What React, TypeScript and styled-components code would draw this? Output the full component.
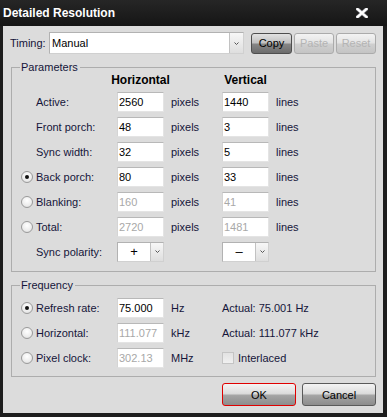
import React from "react";
import styled, { createGlobalStyle, css } from "styled-components";

const Global = createGlobalStyle`
  html, body { margin: 0; padding: 0; background: #1d1d1d; }
  body { font-family: "Liberation Sans", Arial, sans-serif; font-size: 11px; }
  * { box-sizing: border-box; }
`;

const Window = styled.div`
  width: 387px;
  height: 417px;
  background: #1d1d1d;
  display: flex;
  flex-direction: column;
  padding: 0 4px 4px 3px;
`;

const TitleBar = styled.div`
  height: 26px;
  margin: 0 -4px 0 -3px;
  padding: 0 19px 1px 3px;
  display: flex;
  align-items: center;
  justify-content: space-between;
  background: linear-gradient(#262626, #151515);
  color: #fff;
  font-weight: bold;
  font-size: 12px;
`;

const Body = styled.div`
  flex: 1;
  background: #dcdcdc;
  padding: 6px 7px 0 8px;
  display: flex;
  flex-direction: column;
  color: #15153a;
`;

const TopRow = styled.div`
  display: flex;
  align-items: center;
  margin-left: -1px;
  height: 22px;
`;

const TimingLabel = styled.span`
  width: 39px;
`;

const Combo = styled.div<{ $w: number; $h: number }>`
  width: ${(p) => p.$w}px;
  height: ${(p) => p.$h}px;
  display: flex;
  border: 1px solid #b2b2b2;
  border-right-color: #d0d0d0;
  border-bottom-color: #d0d0d0;
  background: #fff;
  color: #000;
`;

const ComboText = styled.div<{ $center?: boolean }>`
  flex: 1;
  display: flex;
  align-items: center;
  padding-left: 2px;
  ${(p) =>
    p.$center &&
    css`
      justify-content: center;
      padding-left: 0;
      font-size: 13px;
    `}
`;

const ComboButton = styled.div<{ $w: number }>`
  width: ${(p) => p.$w}px;
  border-left: 1px solid #c2c2c2;
  background: linear-gradient(#f7f7f7, #dedede);
  display: flex;
  align-items: center;
  justify-content: center;
`;

const ToolButtons = styled.div`
  display: flex;
  gap: 2px;
  margin-left: 7px;
`;

type Variant = "dark" | "disabled" | "focus" | "normal";

const Button = styled.button<{ $variant: Variant; $w: number; $h: number }>`
  width: ${(p) => p.$w}px;
  height: ${(p) => p.$h}px;
  font-family: "Liberation Sans", Arial, sans-serif;
  font-size: 11px;
  border-radius: 3px;
  padding: 0;
  display: flex;
  align-items: center;
  justify-content: center;
  ${(p) =>
    p.$variant === "dark" &&
    css`
      border: 1px solid #4e4e4e;
      background: linear-gradient(#e2e2e2 0%, #c2c2c2 45%, #858585 55%, #6c6c6c 100%);
      color: #000;
    `}
  ${(p) =>
    p.$variant === "disabled" &&
    css`
      border: 1px solid #ababab;
      background: linear-gradient(#f3f3f3 0%, #e4e4e4 45%, #cfcfcf 55%, #c4c4c4 100%);
      color: #b4b4b4;
    `}
  ${(p) =>
    p.$variant === "focus" &&
    css`
      border: 1px solid #e00000;
      background: linear-gradient(#f4f4f4 0%, #dcdcdc 45%, #a4a4a4 55%, #8c8c8c 100%);
      color: #000;
    `}
  ${(p) =>
    p.$variant === "normal" &&
    css`
      border: 1px solid #5a5a5a;
      background: linear-gradient(#f4f4f4 0%, #dcdcdc 45%, #a4a4a4 55%, #8c8c8c 100%);
      color: #000;
    `}
`;

const Group = styled.fieldset<{ $gap: number; $pt: number; $pb: number }>`
  margin: ${(p) => p.$gap}px 0 0 0;
  min-width: 0;
  border: 1px solid #adadad;
  padding: ${(p) => p.$pt}px 8px ${(p) => p.$pb}px 8px;
`;

const Legend = styled.legend`
  padding: 0 2px 0 1px;
  line-height: 13px;
  font-size: 11px;
  color: #15153a;
`;

const Grid = styled.div<{ $header?: boolean; $rows: number }>`
  display: grid;
  grid-template-columns: 16px 81px 47px 58px 47px 1fr;
  grid-template-rows: ${(p) => (p.$header ? "15px " : "")}repeat(${(p) => p.$rows}, 25px);
  align-items: center;
`;

const Header = styled.div<{ $col: number }>`
  grid-column: ${(p) => p.$col};
  justify-self: center;
  align-self: start;
  font-weight: bold;
  font-size: 12px;
  line-height: 13px;
  color: #000;
  white-space: nowrap;
`;

const RadioCell = styled.div`
  grid-column: 1;
  display: flex;
  align-items: center;
`;

const Radio = styled.span<{ $on?: boolean }>`
  width: 12px;
  height: 12px;
  margin-left: 1px;
  border-radius: 50%;
  border: 1px solid #9a9a9a;
  background: radial-gradient(circle at 50% 35%, #ffffff 0%, #ececec 60%, #d6d6d6 100%);
  display: flex;
  align-items: center;
  justify-content: center;
  &::after {
    content: "";
    width: 4px;
    height: 4px;
    border-radius: 50%;
    background: ${(p) => (p.$on ? "#111" : "transparent")};
  }
`;

const Label = styled.div`
  grid-column: 2;
  white-space: nowrap;
`;

const Input = styled.div<{ $col: number; $disabled?: boolean }>`
  grid-column: ${(p) => p.$col};
  height: 20px;
  background: #fff;
  border: 1px solid #e4e4e4;
  border-top-color: #b8b8b8;
  border-left-color: #d4d4d4;
  padding-left: 1px;
  display: flex;
  align-items: center;
  font-size: 11px;
  color: ${(p) => (p.$disabled ? "#a8a8a8" : "#000")};
`;

const Unit = styled.div<{ $col: number; $span?: number }>`
  grid-column: ${(p) => p.$col} / span ${(p) => p.$span ?? 1};
  padding-left: ${(p) => (p.$col === 5 ? 0 : 7)}px;
  white-space: nowrap;
  font-size: 11px;
  display: flex;
  align-items: center;
  gap: 4px;
`;

const PolarityCell = styled.div<{ $col: number }>`
  grid-column: ${(p) => p.$col};
`;

const Check = styled.span`
  width: 12px;
  height: 12px;
  border: 1px solid #c4c4c4;
  background: linear-gradient(#e2e2e2, #f0f0f0);
`;

const Footer = styled.div`
  display: flex;
  justify-content: flex-end;
  gap: 6px;
  margin-top: 6px;
`;

const Chevron = () => (
  <svg width="5" height="3" viewBox="0 0 5 3">
    <polyline points="0.5,0.5 2.5,2.5 4.5,0.5" fill="none" stroke="#555" strokeWidth="1" />
  </svg>
);

const CloseIcon = () => (
  <svg width="12" height="10" viewBox="0 0 12 10">
    <path d="M1.5 1 L10.5 9 M10.5 1 L1.5 9" stroke="#9a9aa0" strokeWidth="3.4" strokeLinecap="square" />
    <path d="M1.5 1 L10.5 9 M10.5 1 L1.5 9" stroke="#ffffff" strokeWidth="2.2" strokeLinecap="square" />
  </svg>
);

type Row = {
  label: string;
  radio?: boolean;
  on?: boolean;
  h: string;
  v: string;
  disabled?: boolean;
};

const paramRows: Row[] = [
  { label: "Active:", h: "2560", v: "1440" },
  { label: "Front porch:", h: "48", v: "3" },
  { label: "Sync width:", h: "32", v: "5" },
  { label: "Back porch:", radio: true, on: true, h: "80", v: "33" },
  { label: "Blanking:", radio: true, h: "160", v: "41", disabled: true },
  { label: "Total:", radio: true, h: "2720", v: "1481", disabled: true },
];

const freqRows = [
  { label: "Refresh rate:", on: true, value: "75.000", unit: "Hz", extra: "Actual: 75.001 Hz" },
  { label: "Horizontal:", value: "111.077", unit: "kHz", extra: "Actual: 111.077 kHz", disabled: true },
  { label: "Pixel clock:", value: "302.13", unit: "MHz", check: true, disabled: true },
];

export default function App() {
  return (
    <>
      <Global />
      <Window>
        <TitleBar>
          <span>Detailed Resolution</span>
          <CloseIcon />
        </TitleBar>
        <Body>
          <TopRow>
            <TimingLabel>Timing:</TimingLabel>
            <Combo $w={195} $h={22}>
              <ComboText>Manual</ComboText>
              <ComboButton $w={14}>
                <Chevron />
              </ComboButton>
            </Combo>
            <ToolButtons>
              <Button $variant="dark" $w={41} $h={21}>Copy</Button>
              <Button $variant="disabled" $w={40} $h={21}>Paste</Button>
              <Button $variant="disabled" $w={40} $h={21}>Reset</Button>
            </ToolButtons>
          </TopRow>

          <Group $gap={7} $pt={0} $pb={7}>
            <Legend>Parameters</Legend>
            <Grid $header $rows={7}>
              <Header $col={3}>Horizontal</Header>
              <Header $col={5}>Vertical</Header>
              {paramRows.map((r) => (
                <React.Fragment key={r.label}>
                  <RadioCell>{r.radio && <Radio $on={r.on} />}</RadioCell>
                  <Label>{r.label}</Label>
                  <Input $col={3} $disabled={r.disabled}>{r.h}</Input>
                  <Unit $col={4}>pixels</Unit>
                  <Input $col={5} $disabled={r.disabled}>{r.v}</Input>
                  <Unit $col={6}>lines</Unit>
                </React.Fragment>
              ))}
              <RadioCell />
              <Label>Sync polarity:</Label>
              <PolarityCell $col={3}>
                <Combo $w={47} $h={20}>
                  <ComboText $center>+</ComboText>
                  <ComboButton $w={13}>
                    <Chevron />
                  </ComboButton>
                </Combo>
              </PolarityCell>
              <PolarityCell $col={5}>
                <Combo $w={47} $h={20}>
                  <ComboText $center>–</ComboText>
                  <ComboButton $w={13}>
                    <Chevron />
                  </ComboButton>
                </Combo>
              </PolarityCell>
            </Grid>
          </Group>

          <Group $gap={7} $pt={3} $pb={6}>
            <Legend>Frequency</Legend>
            <Grid $rows={3}>
              {freqRows.map((r) => (
                <React.Fragment key={r.label}>
                  <RadioCell>
                    <Radio $on={r.on} />
                  </RadioCell>
                  <Label>{r.label}</Label>
                  <Input $col={3} $disabled={r.disabled}>{r.value}</Input>
                  <Unit $col={4}>{r.unit}</Unit>
                  {r.check ? (
                    <Unit $col={5} $span={2}>
                      <Check />
                      Interlaced
                    </Unit>
                  ) : (
                    <Unit $col={5} $span={2}>{r.extra}</Unit>
                  )}
                </React.Fragment>
              ))}
            </Grid>
          </Group>

          <Footer>
            <Button $variant="focus" $w={74} $h={23}>OK</Button>
            <Button $variant="normal" $w={74} $h={23}>Cancel</Button>
          </Footer>
        </Body>
      </Window>
    </>
  );
}
